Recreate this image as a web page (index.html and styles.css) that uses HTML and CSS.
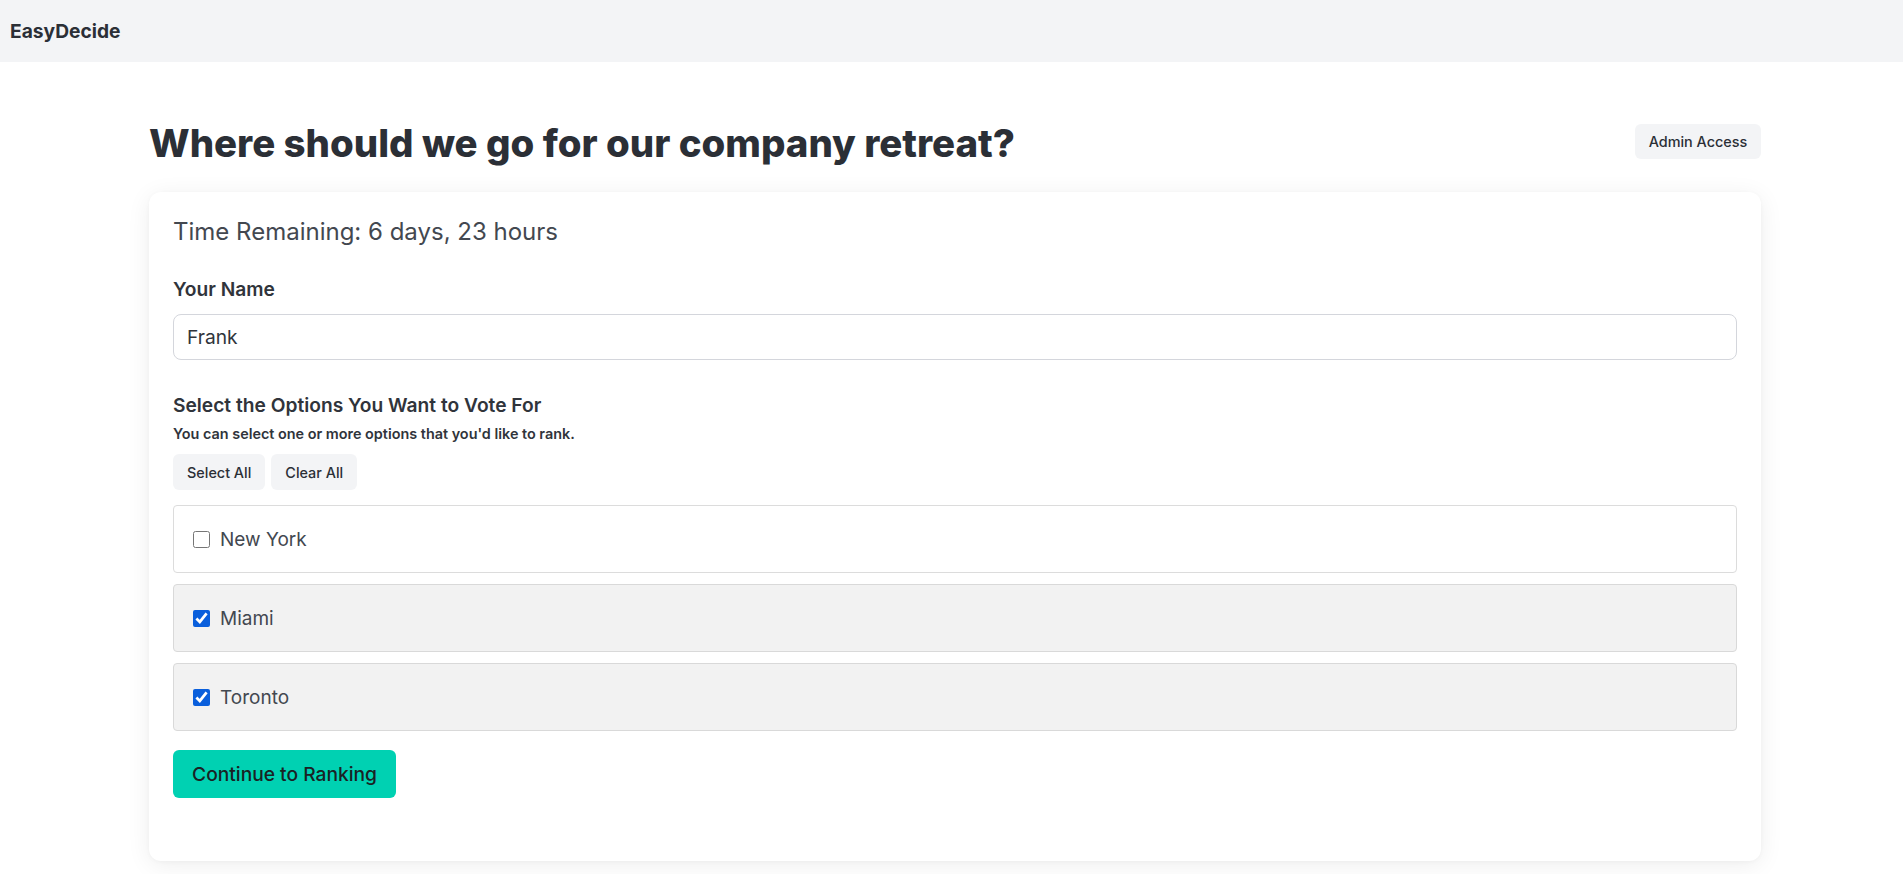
FILE: index.html
```html
<!DOCTYPE html>
<html lang="en">
<head>
<meta charset="utf-8">
<title>EasyDecide</title>
<link rel="stylesheet" href="styles.css">
</head>
<body>
<header class="topbar">
  <span class="brand">EasyDecide</span>
</header>
<main class="page">
  <div class="title-row">
    <h1 class="title">Where should we go for our company retreat?</h1>
    <button class="btn-light admin-btn" type="button">Admin Access</button>
  </div>
  <section class="card">
    <p class="time">Time Remaining: 6 days, 23 hours</p>
    <label class="field-label" for="name">Your Name</label>
    <input class="text-input" id="name" type="text" value="Frank">
    <h2 class="section-title">Select the Options You Want to Vote For</h2>
    <p class="hint">You can select one or more options that you'd like to rank.</p>
    <div class="btn-group">
      <button class="btn-light small-btn" type="button">Select All</button>
      <button class="btn-light small-btn" type="button">Clear All</button>
    </div>
    <div class="options">
      <label class="option">
        <input type="checkbox" class="check">
        <span class="option-text">New York</span>
      </label>
      <label class="option selected">
        <input type="checkbox" class="check" checked>
        <span class="option-text">Miami</span>
      </label>
      <label class="option selected">
        <input type="checkbox" class="check" checked>
        <span class="option-text">Toronto</span>
      </label>
    </div>
    <button class="btn-primary" type="button">Continue to Ranking</button>
  </section>
</main>
</body>
</html>
```

FILE: styles.css
```css
* { box-sizing: border-box; }

body {
  margin: 0;
  font-family: Inter, "Noto Sans", "Liberation Sans", sans-serif;
  color: #30343b;
  background: #ffffff;
}

.topbar {
  height: 62px;
  background: #f3f4f6;
  display: flex;
  align-items: center;
  padding-left: 10px;
}

.brand {
  font-size: 19.2px;
  font-weight: 700;
  color: #2b2f36;
}

.page {
  padding: 61px 142px 40px 149px;
}

.title-row {
  display: flex;
  align-items: center;
  justify-content: space-between;
  height: 40px;
  margin-bottom: 29px;
}

.title {
  margin: 0;
  font-size: 38.4px;
  line-height: 40px;
  font-weight: 800;
  color: #2b2f36;
}

.btn-light {
  border: none;
  background: #f3f4f6;
  border-radius: 6px;
  font-family: inherit;
  color: #2b2f36;
  font-weight: 500;
  cursor: pointer;
}

.admin-btn {
  height: 35px;
  width: 126px;
  font-size: 14.4px;
  padding: 0;
  margin-bottom: 4px;
}

.card {
  background: #fff;
  border-radius: 12px;
  box-shadow: 0 4px 24px rgba(0, 0, 0, 0.07), 0 1px 4px rgba(0, 0, 0, 0.03);
  padding: 24px 24px 63px;
}

.time {
  margin: 0 0 27px;
  font-size: 24px;
  line-height: 32px;
  font-weight: 400;
  color: #434850;
}

.field-label {
  display: block;
  font-size: 19.2px;
  line-height: 28px;
  font-weight: 600;
  margin-bottom: 11px;
}

.text-input {
  display: block;
  width: 100%;
  height: 46px;
  border: 1px solid #d4d6dc;
  border-radius: 8px;
  padding: 0 13px;
  font-family: inherit;
  font-size: 19.2px;
  color: #30343b;
  background: #fff;
  outline: none;
}

.section-title {
  margin: 31px 0 5px;
  font-size: 19.2px;
  line-height: 28px;
  font-weight: 600;
}

.hint {
  margin: 0 0 10px;
  font-size: 14.4px;
  line-height: 20px;
  font-weight: 600;
}

.btn-group {
  display: flex;
  gap: 6px;
  margin-bottom: 15px;
}

.small-btn {
  height: 36px;
  font-size: 14.4px;
  padding: 0 14px;
}

.options {
  display: flex;
  flex-direction: column;
  gap: 11px;
  margin-bottom: 19px;
}

.option {
  display: flex;
  align-items: center;
  gap: 10px;
  height: 68px;
  padding: 0 19px;
  border: 1px solid #dcdcdc;
  border-radius: 4px;
  background: #fff;
  cursor: pointer;
}

.option.selected {
  background: #f2f2f2;
  border-color: #d9d9d9;
}

.check {
  width: 17px;
  height: 17px;
  margin: 0;
  accent-color: #0a5fdc;
}

.option-text {
  font-size: 19px;
  color: #434850;
}

.btn-primary {
  height: 48px;
  width: 223px;
  border: none;
  border-radius: 6px;
  background: #00d1b2;
  color: #1a2224;
  font-family: inherit;
  font-size: 19.2px;
  font-weight: 500;
  padding: 0;
  cursor: pointer;
}
```
